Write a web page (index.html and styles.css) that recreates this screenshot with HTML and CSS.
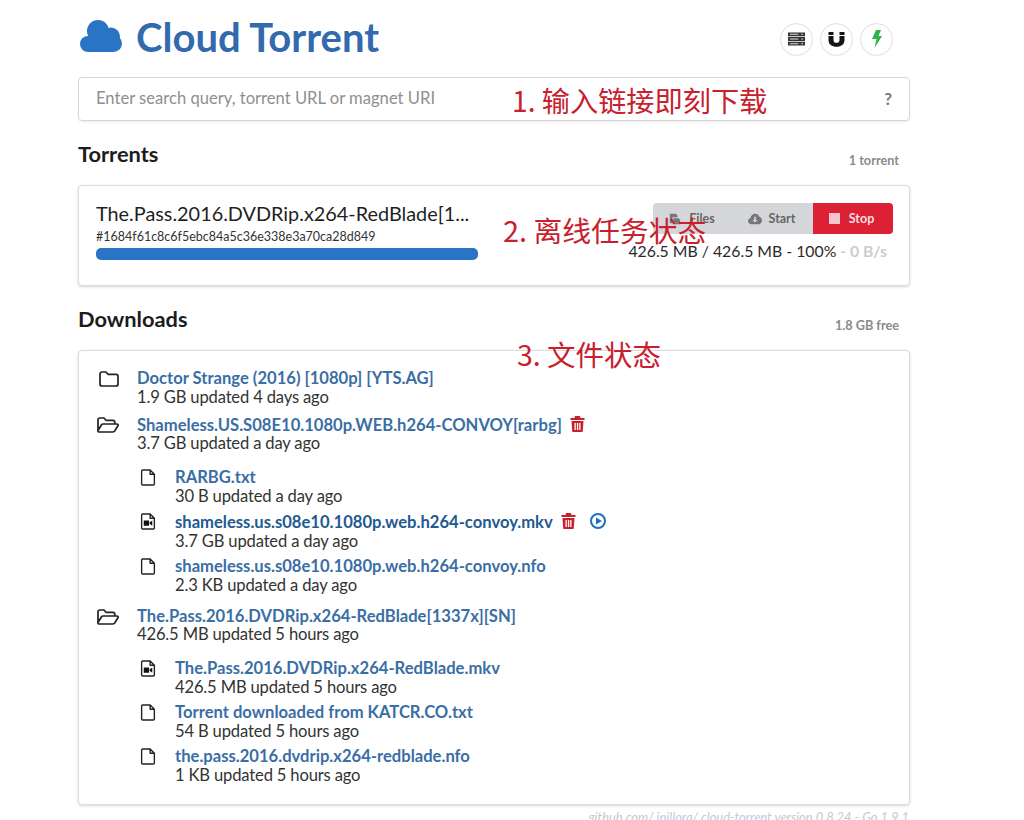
FILE: index.html
```html
<!DOCTYPE html>
<html lang="en">
<head>
<meta charset="utf-8">
<title>Cloud Torrent</title>
<link rel="stylesheet" href="styles.css">
</head>
<body>
<main class="page">
  <header class="head">
    <svg class="logo" viewBox="0 0 42 32"><g fill="#2a74c5"><circle cx="8" cy="24" r="8"/><circle cx="18" cy="11" r="11"/><circle cx="31" cy="16.500" r="9"/><circle cx="33.500" cy="23.500" r="8.500"/><path d="M8 14h26v18H8z"/></g></svg>
    <h1 class="title">Cloud Torrent</h1>
    <div class="rounds">
      <span class="round"><svg viewBox="0 0 18 16" class="ri"><path fill="#333" d="M0 1h18v4H0zM0 6h18v4H0zM0 11h18v4H0z"/><path fill="#ddd" d="M2 2.500h9v1H2zM2 7.500h9v1H2zM2 12.500h9v1H2zM14 2.500h2v1h-2zM14 7.500h2v1h-2zM14 12.500h2v1h-2z"/></svg></span>
      <span class="round"><svg viewBox="0 0 16 16" class="ri"><path fill="#151515" d="M0 1h5v3H0zM11 1h5v3h-5zM0 5h5v4c0 2 1.300 2.800 3 2.800S11 11 11 9V5h5v4c0 4.500-3.500 6.800-8 6.800S0 13.500 0 9z"/></svg></span>
      <span class="round"><svg viewBox="0 0 10 18" class="ri bolt"><path fill="#2fb344" d="M4 0h5L6.500 6H10L2.500 18 4.500 9H0z"/></svg></span>
    </div>
  </header>

  <div class="search">
    <span class="placeholder">Enter search query, torrent URL or magnet URI</span>
    <b class="help">?</b>
  </div>

  <div class="section-head">
    <h2 class="section-title">Torrents</h2>
    <span class="section-note">1 torrent</span>
  </div>

  <section class="card torrent">
    <div class="torrent-left">
      <div class="torrent-name">The.Pass.2016.DVDRip.x264-RedBlade[1...</div>
      <div class="torrent-hash">#1684f61c8c6f5ebc84a5c36e338e3a70ca28d849</div>
      <div class="bar"></div>
    </div>
    <div class="torrent-right">
      <div class="btns">
        <span class="btn"><svg viewBox="0 0 14 14" class="bi"><path fill="#777" d="M1 1h7l2 2v2H4v7H1zM5 6h6l2 2v5H5z"/></svg>Files</span>
        <span class="btn"><svg viewBox="0 0 16 12" class="bi"><path fill="#777" d="M4 12C2 12 0 10.500 0 8.300 0 6.500 1.200 5.200 2.800 4.800 3.300 2 5.500 0 8 0c2.400 0 4.200 1.400 5 3.500 1.700.5 3 2.300 3 4.300 0 2.300-1.800 4.200-4 4.200z"/><path fill="#d5d6d9" d="M7 3.500h2V7h2L8 10 5 7h2z"/></svg>Start</span>
        <span class="btn stop"><i class="sq"></i>Stop</span>
      </div>
      <div class="stats">426.5 MB / 426.5 MB - 100%<span class="speed"> - 0 B/s</span></div>
    </div>
  </section>

  <div class="section-head">
    <h2 class="section-title">Downloads</h2>
    <span class="section-note">1.8 GB free</span>
  </div>

  <section class="card files">
    <div class="item">
      <svg class="ic" viewBox="0 0 20 16"><use href="#folder"/></svg>
      <div class="info"><a class="name">Doctor Strange (2016) [1080p] [YTS.AG]</a><div class="meta">1.9 GB updated 4 days ago</div></div>
    </div>
    <div class="item">
      <svg class="ic open" viewBox="0 0 22 16"><use href="#folder-open"/></svg>
      <div class="info"><a class="name">Shameless.US.S08E10.1080p.WEB.h264-CONVOY[rarbg]</a><svg class="act" viewBox="0 0 14 16"><use href="#trash"/></svg><div class="meta">3.7 GB updated a day ago</div></div>
    </div>
    <div class="children">
      <div class="item sub">
        <svg class="ic" viewBox="0 0 14 16"><use href="#file"/></svg>
        <div class="info"><a class="name">RARBG.txt</a><div class="meta">30 B updated a day ago</div></div>
      </div>
      <div class="item sub">
        <svg class="ic" viewBox="0 0 14 16"><use href="#video"/></svg>
        <div class="info"><a class="name dark">shameless.us.s08e10.1080p.web.h264-convoy.mkv</a><svg class="act" viewBox="0 0 14 16"><use href="#trash"/></svg><svg class="act play" viewBox="0 0 16 16"><use href="#play"/></svg><div class="meta">3.7 GB updated a day ago</div></div>
      </div>
      <div class="item sub">
        <svg class="ic" viewBox="0 0 14 16"><use href="#file"/></svg>
        <div class="info"><a class="name">shameless.us.s08e10.1080p.web.h264-convoy.nfo</a><div class="meta">2.3 KB updated a day ago</div></div>
      </div>
    </div>
    <div class="item">
      <svg class="ic open" viewBox="0 0 22 16"><use href="#folder-open"/></svg>
      <div class="info"><a class="name">The.Pass.2016.DVDRip.x264-RedBlade[1337x][SN]</a><div class="meta">426.5 MB updated 5 hours ago</div></div>
    </div>
    <div class="children">
      <div class="item sub">
        <svg class="ic" viewBox="0 0 14 16"><use href="#video"/></svg>
        <div class="info"><a class="name">The.Pass.2016.DVDRip.x264-RedBlade.mkv</a><div class="meta">426.5 MB updated 5 hours ago</div></div>
      </div>
      <div class="item sub">
        <svg class="ic" viewBox="0 0 14 16"><use href="#file"/></svg>
        <div class="info"><a class="name">Torrent downloaded from KATCR.CO.txt</a><div class="meta">54 B updated 5 hours ago</div></div>
      </div>
      <div class="item sub">
        <svg class="ic" viewBox="0 0 14 16"><use href="#file"/></svg>
        <div class="info"><a class="name">the.pass.2016.dvdrip.x264-redblade.nfo</a><div class="meta">1 KB updated 5 hours ago</div></div>
      </div>
    </div>
  </section>

  <footer class="foot"><span>github.com/</span><span class="fl"> jpillora/ cloud-torrent</span> version 0.8.24 - Go 1.9.1</footer>
</main>

<div class="note n1">1. 输入链接即刻下载</div>
<div class="note n2">2. 离线任务状态</div>
<div class="note n3">3. 文件状态</div>

<svg class="defs" aria-hidden="true">
  <defs>
    <path id="folder" fill="none" stroke="#222" stroke-width="1.700" stroke-linejoin="round" d="M1 3.200C1 2 1.800 1 3 1h4l2 2.300h8c1.200 0 2 .8 2 2V13c0 1.200-.8 2-2 2H3c-1.200 0-2-.8-2-2z"/>
    <path id="folder-open" fill="none" stroke="#222" stroke-width="1.700" stroke-linejoin="round" d="M1 13V3c0-1.100.8-2 2-2h4l2 2.300h7c1.100 0 1.800.8 1.800 1.900V7M1 13.500 4.500 7.800C4.900 7.200 5.400 7 6 7h14c1 0 1.400.7 1 1.500l-3 5.200c-.4.800-1 1.300-2 1.300H2.500C1.300 15 .6 14.300 1 13.500z"/>
    <path id="file" fill="none" stroke="#222" stroke-width="1.300" stroke-linejoin="round" d="M1 2c0-.6.4-1 1-1h7l4 4v9c0 .6-.4 1-1 1H2c-.6 0-1-.4-1-1zM9 1v4h4"/>
    <g id="video"><path fill="none" stroke="#222" stroke-width="1.300" stroke-linejoin="round" d="M1 2c0-.6.4-1 1-1h7l4 4v9c0 .6-.4 1-1 1H2c-.6 0-1-.4-1-1zM9 1v4h4"/><path fill="#111" d="M3 7h5v5H3zM8.500 9 11 7v5L8.500 10z"/></g>
    <path id="trash" fill="#c8202e" d="M4.500 0h5L10 2h4v2H0V2h4zM1 5h12l-.7 10c0 .6-.5 1-1 1H2.700c-.5 0-1-.4-1-1zM4 7v7h1.300V7zM6.400 7v7h1.300V7zM8.700 7v7H10V7z" fill-rule="evenodd"/>
    <g id="play"><circle cx="8" cy="8" r="7" fill="none" stroke="#1e70bf" stroke-width="2"/><path fill="#1e70bf" d="M6 4.500 12 8 6 11.500z"/></g>
  </defs>
</svg>
</body>
</html>
```

FILE: styles.css
```css
* { box-sizing: border-box; }
html, body { margin: 0; height: 820px; overflow: hidden; background: #fff; }
body { font-family: Lato, "Liberation Sans", sans-serif; color: #222; position: relative; }
.page { width: 832px; margin-left: 78px; }
.head { display: flex; align-items: center; height: 77px; padding-left: 2px; }
.logo { width: 42px; height: 32px; margin-top: -5px; flex: none; }
.title { margin: -3px 0 0 14px; font-size: 40px; font-weight: 700; color: #3369ad; line-height: 1; }
.rounds { margin-left: auto; margin-right: 17px; display: flex; gap: 7px; margin-top: 1px; }
.round { width: 33px; height: 33px; border-radius: 50%; border: 1.500px solid #ddd; display: flex; align-items: center; justify-content: center; background: #fff; }
.ri { width: 17px; height: 16px; }
.bolt { width: 10px; height: 18px; }
.search { height: 44px; border: 1px solid #d6d6d6; border-radius: 4px; display: flex; align-items: center; justify-content: space-between; padding: 0 17px 2px; box-shadow: 0 1px 2px rgba(0,0,0,.08); }
.placeholder { font-size: 16.600px; color: #8f8f8f; }
.help { font-size: 17px; color: #777; }
.section-head { display: flex; justify-content: space-between; align-items: flex-end; height: 64px; padding-bottom: 19px; padding-right: 11px; }
.section-title { margin: 0; font-size: 21.800px; font-weight: 700; color: #1c1c1c; line-height: 24px; }
.section-note { font-size: 12.700px; font-weight: 700; color: #8a8a8a; margin-bottom: -2px; }
.card { border: 1px solid #dcdcdc; border-radius: 4px; box-shadow: 0 1px 3px rgba(0,0,0,.16); background: #fff; }
.torrent { height: 101px; display: flex; justify-content: space-between; padding: 17px 16px 0 17px; }
.torrent-left { width: 382px; }
.torrent-name { font-size: 19.850px; line-height: 24px; margin-top: -2px; white-space: nowrap; color: #1f1f1f; }
.torrent-hash { font-size: 12.500px; line-height: 16px; margin-top: 4px; color: #333; }
.bar { height: 12px; margin-top: 3px; border-radius: 5px; background: #2a74c5; }
.torrent-right { display: flex; flex-direction: column; align-items: flex-end; }
.btns { display: flex; width: 240px; height: 31px; background: #d5d6d9; border-radius: 4px; font-size: 12.500px; font-weight: 700; color: #666; }
.btn { flex: 1; display: flex; align-items: center; justify-content: center; gap: 7px; padding-right: 3px; }
.bi { width: 14px; height: 12px; }
.stop { background: #db2133; color: #f6dfe1; border-radius: 0 4px 4px 0; gap: 9px; padding-right: 3px; }
.sq { width: 11px; height: 11px; background: #f5c6cb; }
.stats { font-size: 15.800px; line-height: 20px; margin: 7px 6px 0 0; color: #2a2a2a; }
.speed { color: #ccc; font-weight: 700; }
.files { height: 455px; padding: 19px 20px 0 20px; }
.item { display: flex; align-items: flex-start; margin-bottom: 9px; }
.item.sub { margin-bottom: 7.500px; }
.children { margin: 16px 0 13px 38px; }
.children:last-of-type { margin-top: 16px; }
.children .item:last-child { margin-bottom: 0; }
.ic { width: 20px; height: 16px; margin-top: 1px; flex: none; margin-right: 18px; }
.ic.open { width: 22px; height: 16px; margin-left: -2px; }
.sub .ic { width: 18px; height: 17px; margin-top: 0; margin-right: 20px; transform: translateX(2px); }
.info { font-size: 16.600px; line-height: 17.500px; }
.name { font-weight: 700; color: #3a6ea5; }
.name.dark { color: #22598f; }
.meta { color: #333; letter-spacing: -0.170px; line-height: 19px; }
.act { width: 15px; height: 16px; margin-left: 8px; vertical-align: -1px; }
.play { width: 18px; margin-left: 13px; }
.foot { margin-top: 4px; text-align: right; font-size: 12.900px; font-style: italic; color: #c9c9c9; padding-right: 1px; }
.fl { color: #b9cde0; }
.note { position: absolute; color: #c8202e; font-family: "Noto Sans CJK SC", "Noto Sans", sans-serif; font-size: 28.500px; line-height: 34px; white-space: nowrap; }
.n1 { left: 512px; top: 83px; font-size: 28.200px; }
.n2 { left: 503px; top: 213px; font-size: 28.800px; }
.n3 { left: 517px; top: 337px; }
.defs { position: absolute; width: 0; height: 0; }
```
